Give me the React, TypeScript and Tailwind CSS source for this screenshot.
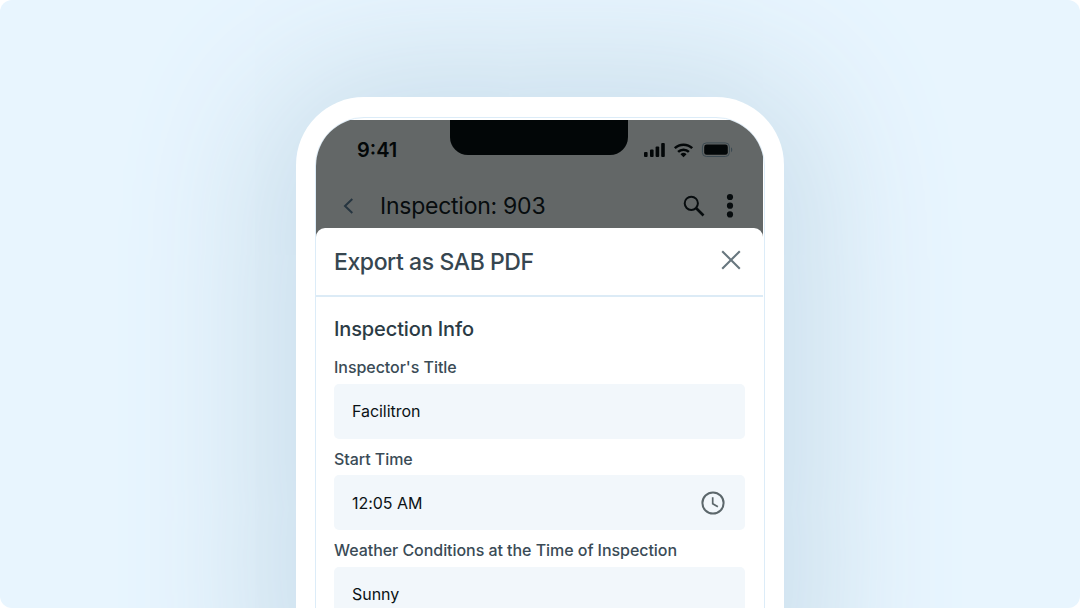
import type { ReactNode } from "react"

const fields = [
  { label: "Inspector's Title", value: "Facilitron" },
  { label: "Start Time", value: "12:05 AM", time: true },
  { label: "Weather Conditions at the Time of Inspection", value: "Sunny" },
]

function StatusIcons() {
  return (
    <svg width="90" height="18" viewBox="0 0 90 18" fill="#030708">
      {/* Signal */}
      <rect x="1" y="11" width="3.6" height="5" rx="1" />
      <rect x="7" y="8.5" width="3.6" height="7.5" rx="1" />
      <rect x="12.6" y="5.5" width="3.6" height="10.5" rx="1" />
      <rect x="18.2" y="2" width="3.6" height="14" rx="1" />
      {/* Wifi */}
      <g fill="none" stroke="#030708" strokeWidth="2.5">
        <path d="M31.8 7.2a12.4 12.4 0 0 1 17.4 0" />
        <path d="M35.1 10.9a7.6 7.6 0 0 1 10.8 0" />
      </g>
      <path d="M40.5 16.2l-3-3a4.3 4.3 0 0 1 6 0z" />
      {/* Battery */}
      <rect x="59.4" y="1.9" width="27" height="13.6" rx="4" fill="none" stroke="#3c4a52" strokeWidth="1" />
      <rect x="61.2" y="3.6" width="23.6" height="10.2" rx="2.4" />
      <path d="M88 6.2c1.7.9 1.7 4 0 5z" fill="#3c4a52" />
    </svg>
  )
}

function Field({ label, value, icon }: { label: string; value: string; icon?: ReactNode }) {
  return (
    <div className="h-[91.5px] shrink-0">
      <div className="h-[26.5px] text-base leading-5 font-medium tracking-[-0.05px] text-[#3a4b56]">{label}</div>
      <div className="flex h-[55px] items-center justify-between rounded-[5px] bg-[#f2f7fb] pr-5 pl-[18px]">
        <span className="text-base tracking-[-0.05px] text-[#0b1215]">{value}</span>
        {icon}
      </div>
    </div>
  )
}

function ClockIcon() {
  return (
    <svg width="24" height="24" viewBox="0 0 24 24" fill="none" stroke="#5c676b" strokeWidth="2">
      <circle cx="12" cy="12" r="10.6" />
      <path d="M11.7 6.2v6.5l5.2 3.1" strokeWidth="1.7" />
    </svg>
  )
}

export default function App() {
  return (
    <div className="h-[608px] w-[1080px] overflow-hidden bg-white font-['Inter',sans-serif]">
      <div className="flex h-full justify-center overflow-hidden rounded-[12px] bg-[#e8f5fe] pt-[97px]">
        {/* Phone */}
        <div className="h-[900px] w-[488px] shrink-0 rounded-[68px] bg-white px-[19px] pt-5 shadow-[0_8px_150px_28px_#c6dbe9]">
          <div className="h-full overflow-hidden rounded-t-[49px] border border-[#dcecf8] pt-[2px] pr-px">
            <div className="flex h-full flex-col bg-[#636767]">
              {/* Status bar */}
              <div className="flex h-[58px] shrink-0 items-start pl-[41px]">
                <span className="w-[93px] pt-[18px] text-[20px] leading-6 font-semibold text-[#030708]">9:41</span>
                <div className="h-[34.5px] w-[178px] rounded-b-[18px] bg-[#020607]" />
                <div className="ml-[14.5px] pt-[21px]">
                  <StatusIcons />
                </div>
              </div>

              {/* App bar */}
              <div className="flex h-[49.5px] shrink-0 items-center pt-[6px] pr-[29px] pl-[25.5px]">
                <svg width="12" height="18" viewBox="0 0 12 18" fill="none" stroke="#263540" strokeWidth="2">
                  <path d="M10.3 2 3 9l7.3 7" />
                </svg>
                <h1 className="ml-[26.5px] flex-1 text-[23px] leading-7 tracking-[-0.25px] text-[#070c0e]">Inspection: 903</h1>
                <svg width="22" height="22" viewBox="0 0 22 22" fill="none" stroke="#070c0e" strokeWidth="2">
                  <circle cx="8.3" cy="8.3" r="6.6" />
                  <path d="m13 13 7.5 7.5" strokeWidth="2.6" />
                </svg>
                <svg className="ml-[21px]" width="8" height="26" viewBox="0 0 8 26" fill="#070c0e">
                  <circle cx="4" cy="4" r="3.1" />
                  <circle cx="4" cy="12.7" r="3.1" />
                  <circle cx="4" cy="21.4" r="3.1" />
                </svg>
              </div>

              {/* Sheet */}
              <div className="flex-1 rounded-t-[9px] bg-white">
                <div className="flex h-[69px] items-center justify-between border-b-2 border-[#dcebf6] pr-[22px] pl-[18px]">
                  <h2 className="pt-[2px] text-[23px] leading-7 font-[450] tracking-[-0.42px] text-[#364650]">Export as SAB PDF</h2>
                  <svg className="-mt-[2px]" width="20" height="20" viewBox="0 0 20 20" fill="none" stroke="#68777f" strokeWidth="2.1">
                    <path d="m1.2 1.2 17.6 17.6M18.8 1.2 1.2 18.8" />
                  </svg>
                </div>
                <div className="flex flex-col pt-[18.5px] pr-[18.5px] pl-[18px]">
                  <h3 className="mb-[14px] text-xl leading-7 font-medium tracking-[-0.13px] text-[#2b3b45]">Inspection Info</h3>
                  {fields.map((f) => (
                    <Field key={f.label} label={f.label} value={f.value} icon={f.time && <ClockIcon />} />
                  ))}
                </div>
              </div>
            </div>
          </div>
        </div>
      </div>
    </div>
  )
}
